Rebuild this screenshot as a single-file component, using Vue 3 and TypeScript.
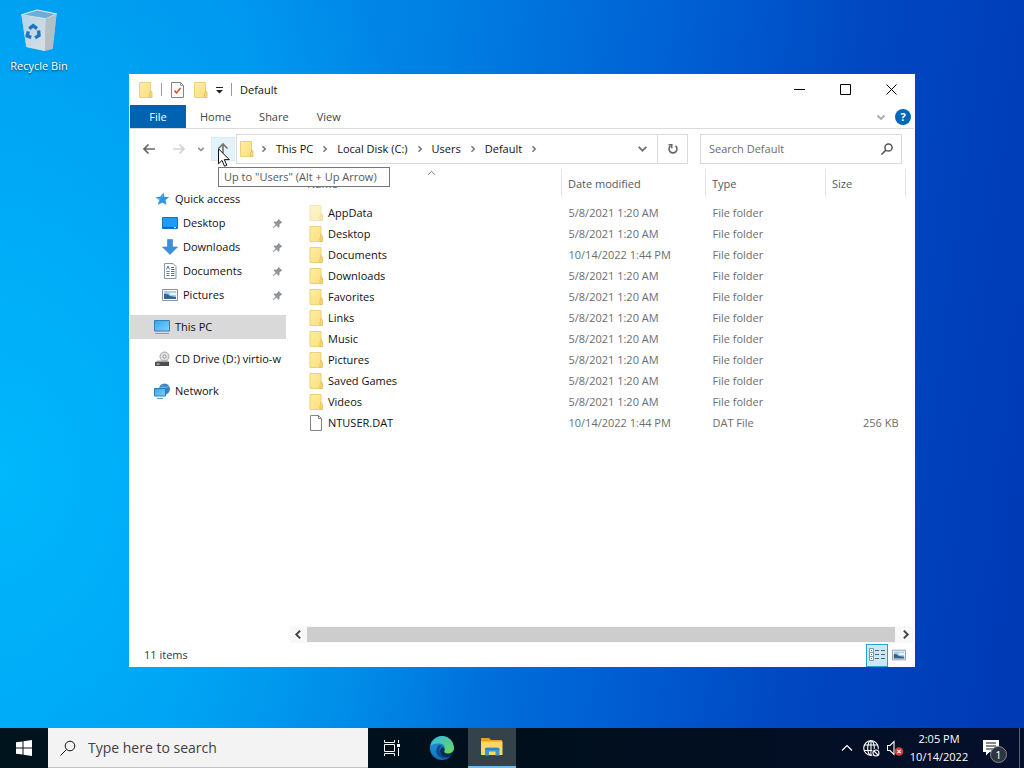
<script setup lang="ts">
import { ref } from 'vue'

interface Entry {
  name: string
  date: string
  type: string
  size: string
  icon: string
  faded?: boolean
}

interface Place {
  label: string
  icon: string
  nested?: boolean
  spaced?: boolean
}

const tabs: string[] = ['Home', 'Share', 'View']
const crumbs: string[] = ['This PC', 'Local Disk (C:)', 'Users', 'Default']

const places: Place[] = [
  { label: 'Quick access', icon: 'star' },
  { label: 'Desktop', icon: 'desktop', nested: true },
  { label: 'Downloads', icon: 'download', nested: true },
  { label: 'Documents', icon: 'document', nested: true },
  { label: 'Pictures', icon: 'picture', nested: true },
  { label: 'This PC', icon: 'computer', spaced: true },
  { label: 'CD Drive (D:) virtio-w', icon: 'drive', spaced: true },
  { label: 'Network', icon: 'network', spaced: true },
]
const current = ref('This PC')

const folder = (name: string, date = '5/8/2021 1:20 AM', faded = false): Entry => ({
  name, date, type: 'File folder', size: '', icon: 'folder', faded,
})

const entries: Entry[] = [
  folder('AppData', '5/8/2021 1:20 AM', true),
  folder('Desktop'),
  folder('Documents', '10/14/2022 1:44 PM'),
  folder('Downloads'),
  folder('Favorites'),
  folder('Links'),
  folder('Music'),
  folder('Pictures'),
  folder('Saved Games'),
  folder('Videos'),
  { name: 'NTUSER.DAT', date: '10/14/2022 1:44 PM', type: 'DAT File', size: '256 KB', icon: 'file' },
]

const query = ref('')
const taskQuery = ref('')
</script>

<template>
  <div class="screen">
    <svg class="defs" aria-hidden="true">
      <defs>
        <linearGradient id="paper" x1="0" y1="0" x2="1" y2="1">
          <stop offset="0" stop-color="#ffeda3" /><stop offset="1" stop-color="#fbdf7d" />
        </linearGradient>
        <linearGradient id="glass" x1="0" y1="0" x2="1" y2="1">
          <stop offset="0" stop-color="#35a5ee" /><stop offset="1" stop-color="#7fd3fb" />
        </linearGradient>
        <linearGradient id="binFront" x1="0" y1="0" x2="1" y2="1">
          <stop offset="0" stop-color="#b5d3e6" /><stop offset="1" stop-color="#dadfe2" />
        </linearGradient>
        <linearGradient id="edgeBlue" x1="0" y1="0" x2="1" y2="1">
          <stop offset="0" stop-color="#1b9de2" /><stop offset="1" stop-color="#0c59a4" />
        </linearGradient>
        <linearGradient id="edgeGreen" x1="0" y1="0" x2="1" y2="1">
          <stop offset="0" stop-color="#35b8e8" /><stop offset="1" stop-color="#6bdc52" />
        </linearGradient>
      </defs>
      <symbol id="folder" viewBox="0 0 15 16">
        <path d="M1.500 .5h11v15h-11z" fill="url(#paper)" stroke="#ecd07c" />
        <path d="M11.500 15.500v-3.500l1-1.500v-2l1.500 2v5z" fill="#f9dc79" stroke="#deba5a" stroke-width=".8" />
      </symbol>
      <symbol id="file" viewBox="0 0 16 16">
        <path d="M2.500 .5h8l3 3v12h-11z" fill="#fff" stroke="#858585" />
        <path d="M10.500 .5v3h3" fill="none" stroke="#858585" />
      </symbol>
      <symbol id="star" viewBox="0 0 16 16">
        <path d="M9.500 1.500l1 4.500 4.800 .1-3.800 3 1 5-4-2.700-4.800 2.700 1.600-4.900-3.800-3.200 4.700-.3z" fill="#2f94e0" />
        <path d="M2 6.500l4 1.500-1.500 5M9.500 2.500l-1.500 4" fill="none" stroke="#65b8f0" stroke-width=".8" />
      </symbol>
      <symbol id="desktop" viewBox="0 0 16 16">
        <path d="M.5 2.500h15v11h-15z" fill="#1e9bf5" stroke="#1474c4" />
        <path d="M1 12h14v1h-14z" fill="#0d62ad" /><path d="M12 12h2v1h-2z" fill="#fff" />
      </symbol>
      <symbol id="download" viewBox="0 0 16 16">
        <path d="M5.500 .5h5v7.500h5l-7.500 7.500-7.500-7.500h5z" fill="#3d8fdc" stroke="#3080cb" stroke-width=".6" />
      </symbol>
      <symbol id="document" viewBox="0 0 16 16">
        <path d="M2.500 .5h8.500l3 3v12h-11.500z" fill="#fff" stroke="#8797a3" />
        <path d="M4.500 6.500l1.500-3.500 1.500 3.500M9 4.500h3M9 6.500h3.500M4.500 8.500h3M9 8.500h3.500M4.500 10.500h3M9 10.500h3.500M4.500 12.500h3M9 12.500h3.500" fill="none" stroke="#3580b5" />
      </symbol>
      <symbol id="picture" viewBox="0 0 16 16">
        <path d="M.5 2.500h15v11h-15z" fill="#fff" stroke="#8592a3" />
        <path d="M2 4h12v8h-12z" fill="#9bd0f3" />
        <path d="M2 7q3-1 6 2l6 1v2h-12z" fill="#3b6288" /><path d="M7 6q3-1 7 0v2h-5z" fill="#e9f5fc" />
      </symbol>
      <symbol id="computer" viewBox="0 0 16 16">
        <path d="M.5 1.500h15v10.500h-15z" fill="url(#glass)" stroke="#2b82bd" />
        <path d="M1 14.500h14" stroke="#69a6cb" />
      </symbol>
      <symbol id="drive" viewBox="0 0 16 16">
        <circle cx="10.500" cy="5.500" r="4.500" fill="#e0e0e0" stroke="#a6a6a6" />
        <circle cx="10.500" cy="5.500" r="1.500" fill="#fff" stroke="#8d8d8d" />
        <path d="M3 9.500h11l1.500 2h-14z" fill="#aaa" /><path d="M1 11h14v4h-14z" fill="#4d4d4d" />
        <path d="M2.500 13h3" stroke="#ddd" />
      </symbol>
      <symbol id="network" viewBox="0 0 16 16">
        <circle cx="10.500" cy="6" r="5.500" fill="#3785c4" />
        <path d="M8 2q3 2 3 9M5 4.500q5 1 10-1" stroke="#8dc4ea" fill="none" stroke-width=".8" />
        <path d="M.5 5.500h11v7.500h-11z" fill="url(#glass)" stroke="#2a7db7" />
        <path d="M3 15.500h6" stroke="#559dcd" />
      </symbol>
      <symbol id="pin" viewBox="0 0 12 12">
        <path d="M7 .8l4.200 4.200-1.300 .4-1.900 2 .2 2.300-1 .8-2.400-2.400-3.400 3.200-.7-.7 3.300-3.400-2.400-2.400 .9-1 2.200 .2 2.100-1.900z" fill="#8c959e" />
      </symbol>
      <symbol id="chevron" viewBox="0 0 10 10">
        <path d="M1.500 3.500l3.500 3.500 3.500-3.500" fill="none" stroke="currentColor" stroke-width="1.800" />
      </symbol>
      <symbol id="thinUp" viewBox="0 0 12 12">
        <path d="M1 8.500l5-5 5 5" fill="none" stroke="currentColor" stroke-width="1.200" />
      </symbol>
      <symbol id="crumb" viewBox="0 0 8 8">
        <path d="M2.500 1.200l2.800 2.800-2.800 2.800" fill="none" stroke="#777" stroke-width="1.500" />
      </symbol>
      <symbol id="arrow" viewBox="0 0 14 14">
        <path d="M13 7h-11M6.500 2.500l-4.500 4.500 4.500 4.500" fill="none" stroke="currentColor" stroke-width="1.700" />
      </symbol>
      <symbol id="lens" viewBox="0 0 16 16">
        <circle cx="10" cy="6" r="4.800" fill="none" stroke="currentColor" />
        <path d="M6.500 9.500l-6 6" stroke="currentColor" />
      </symbol>
    </svg>

    <main class="desktop">
      <button class="shortcut">
        <svg class="bin" viewBox="0 0 42 44">
          <path d="M3 6l16-5 20 4-4 36-8 2-19-4z" fill="#9fc8e2" />
          <path d="M3 6l16-5 20 4-11 5z" fill="#6eaed6" stroke="#e2f0f8" />
          <path d="M3 6l25 4-1 33-19-4z" fill="url(#binFront)" />
          <path d="M28 10l11-5-4 35-8 3z" fill="#b4bec5" />
          <g fill="none" stroke="#1976c5" stroke-width="3.500">
            <path d="M11 20l4-3 4 3M20.500 22l.5 5-4 2.500M13 29l-4-1.500 1-4.500" />
          </g>
        </svg>
        <span>Recycle Bin</span>
      </button>

      <section class="window" aria-label="Default">
        <header class="titlebar">
          <svg class="quick"><use href="#folder" /></svg>
          <i class="rule"></i>
          <button class="quick" aria-label="Properties">
            <svg viewBox="0 0 15 16">
              <path d="M1.500 .5h9l3 3v12h-12z" fill="#fff" stroke="#858585" />
              <path d="M10.500 .5v3h3" fill="none" stroke="#999" />
              <path d="M4.500 8.500l2 2.500 4-5" fill="none" stroke="#d8552c" stroke-width="1.600" />
            </svg>
          </button>
          <button class="quick" aria-label="New folder"><svg><use href="#folder" /></svg></button>
          <button class="caret" aria-label="Customize Quick Access Toolbar">
            <svg viewBox="0 0 7 8"><path d="M0 1.500h7" stroke="#222" /><path d="M0 4h7l-3.500 3.500z" fill="#222" /></svg>
          </button>
          <i class="rule"></i>
          <span class="title">Default</span>
          <div class="controls">
            <button aria-label="Minimize"><svg viewBox="0 0 11 11"><path d="M0 5.500h11" /></svg></button>
            <button aria-label="Maximize"><svg viewBox="0 0 11 11"><path d="M.5 .5h10v10h-10z" /></svg></button>
            <button aria-label="Close"><svg viewBox="0 0 11 11"><path d="M.5 .5l10 10M10.500 .5l-10 10" /></svg></button>
          </div>
        </header>

        <nav class="ribbon">
          <button class="tab file">File</button>
          <button v-for="tab in tabs" :key="tab" class="tab">{{ tab }}</button>
          <button class="expand" aria-label="Expand the Ribbon"><svg><use href="#chevron" /></svg></button>
          <button class="help" aria-label="Help">?</button>
        </nav>

        <div class="toolbar">
          <button class="nav" aria-label="Back"><svg><use href="#arrow" /></svg></button>
          <button class="nav forward" aria-label="Forward"><svg><use href="#arrow" /></svg></button>
          <button class="recent" aria-label="Recent locations"><svg><use href="#chevron" /></svg></button>
          <div class="up-wrap">
            <button class="up" aria-label="Up"><svg><use href="#arrow" /></svg></button>
            <span class="tooltip" role="tooltip">Up to "Users" (Alt + Up Arrow)</span>
            <svg class="pointer" viewBox="0 0 12 19">
              <path d="M.5 .8v15l3.500-3.400 2.500 5.800 2.300-1-2.500-5.600h5z" fill="#fff" stroke="#111" />
            </svg>
          </div>
          <div class="address">
            <svg class="address-icon"><use href="#folder" /></svg>
            <svg class="sep"><use href="#crumb" /></svg>
            <template v-for="crumb in crumbs" :key="crumb">
              <button class="crumb">{{ crumb }}</button>
              <svg class="sep"><use href="#crumb" /></svg>
            </template>
            <button class="history" aria-label="Previous locations"><svg><use href="#chevron" /></svg></button>
            <button class="refresh" aria-label="Refresh">
              <svg viewBox="0 0 12 12">
                <path d="M8.500 2.800a4 4 0 1 1-5 0" fill="none" stroke="#666" stroke-width="1.600" />
                <path d="M1.500 1.800h3.300v3.500" fill="none" stroke="#666" stroke-width="1.500" />
              </svg>
            </button>
          </div>
          <label class="search">
            <input v-model="query" type="text" placeholder="Search Default" aria-label="Search Default" />
            <svg><use href="#lens" /></svg>
          </label>
        </div>

        <div class="body">
          <nav class="places">
            <button
              v-for="place in places"
              :key="place.label"
              class="place"
              :class="{ nested: place.nested, spaced: place.spaced, current: place.label === current }"
              @click="current = place.label"
            >
              <svg class="place-icon"><use :href="'#' + place.icon" /></svg>
              <span>{{ place.label }}</span>
              <svg v-if="place.nested" class="pin"><use href="#pin" /></svg>
            </button>
          </nav>

          <div class="pane">
            <div class="listing">
              <svg class="sort"><use href="#thinUp" /></svg>
              <table>
                <colgroup><col /><col class="c-date" /><col class="c-type" /><col class="c-size" /></colgroup>
                <thead>
                  <tr><th>Name</th><th>Date modified</th><th>Type</th><th>Size</th></tr>
                </thead>
                <tbody>
                  <tr v-for="entry in entries" :key="entry.name">
                    <td class="name">
                      <div>
                        <svg :class="{ faded: entry.faded }"><use :href="'#' + entry.icon" /></svg>{{ entry.name }}
                      </div>
                    </td>
                    <td>{{ entry.date }}</td>
                    <td>{{ entry.type }}</td>
                    <td class="size">{{ entry.size }}</td>
                  </tr>
                </tbody>
              </table>
            </div>
            <div class="scrollbar">
              <button class="left" aria-label="Scroll left"><svg><use href="#chevron" /></svg></button>
              <div class="thumb"></div>
              <button class="right" aria-label="Scroll right"><svg><use href="#chevron" /></svg></button>
            </div>
          </div>
        </div>

        <footer class="status">
          <span>11 items</span>
          <button class="view selected" aria-label="Details view">
            <svg viewBox="0 0 16 14" fill="none">
              <path d="M.5 .5h4v4h-4zM.5 4.500h4v4h-4zM.5 8.500h4v4h-4z" fill="#fff" stroke="#7f95a5" />
              <path d="M2 2.500h1M2 6.500h1M2 10.500h1M6 2.500h4M12 2.500h4M6 6.500h4M12 6.500h4M6 10.500h4M12 10.500h4" stroke="#56636c" />
            </svg>
          </button>
          <button class="view" aria-label="Large icons view"><svg><use href="#picture" /></svg></button>
        </footer>
      </section>
    </main>

    <footer class="taskbar">
      <button class="start" aria-label="Start">
        <svg viewBox="0 0 16 16"><path d="M0 2.300l6.500-.9v6.100h-6.500zM7.500 1.200l8.500-1.200v7.500h-8.500zM0 8.500h6.500v6.100l-6.500-.9zM7.500 8.500h8.500v7.500l-8.500-1.200z" fill="#fff" /></svg>
      </button>
      <label class="task-search">
        <svg><use href="#lens" /></svg>
        <input v-model="taskQuery" type="text" placeholder="Type here to search" aria-label="Type here to search" />
      </label>
      <button class="task" aria-label="Task View">
        <svg class="task-view" viewBox="0 0 16 16" fill="none" stroke="#fff">
          <path d="M.5 0v2.500h10v-2.500M.5 16v-2.500h10v2.500M.5 4.500h10v7h-10zM14.500 0v3M14.500 8v8" />
          <path d="M13 4h3v3h-3z" fill="#fff" stroke="none" />
        </svg>
      </button>
      <button class="task" aria-label="Microsoft Edge">
        <svg class="edge" viewBox="0 0 24 24">
          <circle cx="12" cy="12" r="12" fill="url(#edgeBlue)" />
          <path d="M.2 10a12 12 0 0 1 23.800 1.500c0 4-3 6-6.300 6-3 0-4.200-1.500-3.500-2.700 1.500-2.500 .5-6.800-4.200-7.300-4.500-.3-8 .8-9.800 2.500z" fill="url(#edgeGreen)" />
          <path d="M10 8.500c-4 2.500-5 8-1.500 11.500 3 3.300 8.500 3 12.500-.3-5 1.800-9.700 .2-11.200-3.500-.8-2.200-.2-4.500 1.700-6z" fill="#0a4b91" />
          <path d="M14.500 14.500c-.8 1.400 .5 3.200 3.500 3.200 2.500 0 5-1.200 5.800-4 0 2-1 5-2.500 6.300-4 2-9 1-10.800-2.800-.9-2 0-5 1.500-6.200 2 .5 3 2.200 2.500 3.500z" fill="#04172a" opacity=".75" />
        </svg>
      </button>
      <button class="task active" aria-label="File Explorer">
        <svg class="explorer" viewBox="0 0 22 18">
          <path d="M0 0h8l2 2h11v5h-21z" fill="#e5a31d" /><path d="M1 3.500h20.500v13.500h-21.500v-13.500z" fill="#ffd767" />
          <path d="M4 17.500v-6.500l1.500-1.500h11.500l1.500 1.500v6.500h-4v-4h-6.500v4z" fill="#3a98d8" />
          <path d="M4 11h14.500" stroke="#2275b0" />
        </svg>
      </button>
      <div class="tray">
        <button class="tray-item" aria-label="Show hidden icons"><svg><use href="#thinUp" /></svg></button>
        <button class="tray-item" aria-label="Network">
          <svg class="globe" viewBox="0 0 17 17" fill="none" stroke="#fff" stroke-width="1.100">
            <circle cx="8" cy="8" r="7.300" /><ellipse cx="8" cy="8" rx="3.300" ry="7.300" />
            <path d="M1.500 5h13M1 10.500h14M8 .7v14.500" />
            <circle cx="13" cy="13" r="4.500" fill="#05122a" stroke="none" />
            <circle cx="13" cy="13" r="3" /><path d="M11 11l4 4" />
          </svg>
        </button>
        <button class="tray-item" aria-label="Volume">
          <svg class="globe" viewBox="0 0 17 17">
            <path d="M.5 5.500h2.500l4-4v13l-4-4h-2.500z" fill="none" stroke="#fff" stroke-width="1.100" />
            <circle cx="12" cy="11.500" r="4.300" fill="#d63c3c" />
            <path d="M10.300 9.800l3.400 3.400M13.700 9.800l-3.400 3.400" stroke="#fff" stroke-width="1.100" />
          </svg>
        </button>
        <button class="clock"><span>2:05 PM</span><span>10/14/2022</span></button>
        <button class="notes" aria-label="Notifications, 1 new">
          <svg viewBox="0 0 16 16">
            <path d="M0 0h16v12h-9.500l-3.500 3.500v-3.500h-3z" fill="#fff" />
            <path d="M3 3h10M3 6h10M3 9h7" stroke="#07142b" />
          </svg>
          <span class="badge">1</span>
        </button>
        <button class="peek" aria-label="Show desktop"></button>
      </div>
    </footer>
  </div>
</template>

<style>
html, body { margin: 0; }
</style>

<style scoped>
* { box-sizing: border-box; }
.screen {
  display: flex;
  flex-direction: column;
  height: 100vh;
  min-height: 480px;
  overflow: hidden;
  font: 11px/16px "Open Sans", "Noto Sans", sans-serif;
  color: #111;
}
.defs { position: absolute; width: 0; height: 0; }
svg { display: block; flex: none; }
button { display: flex; align-items: center; justify-content: center; margin: 0; padding: 0; border: 0; background: none; font: inherit; color: inherit; }
input { min-width: 0; padding: 0; border: 0; outline: 0; background: none; font: inherit; color: #222; }

.desktop {
  position: relative;
  flex: 1;
  min-height: 0;
  background:
    radial-gradient(ellipse 50% 90% at 0% 65%, rgba(0, 192, 255, 0.8), rgba(0, 180, 255, 0) 100%),
    linear-gradient(97deg, #0098ee 0%, #0092ee 22%, #007fe2 40%, #0062d4 60%, #0048c2 78%, #0039b4 100%);
}
.shortcut { flex-direction: column; gap: 6px; width: 78px; padding-top: 9px; color: #fff; text-shadow: 0 1px 2px rgba(0, 0, 0, 0.7); }
.bin { width: 42px; height: 43px; }

.window {
  position: absolute;
  inset: 74px 109px 61px 129px;
  display: flex;
  flex-direction: column;
  border: 1px solid #fff;
  border-width: 0 1px;
  background: #fff;
}
.titlebar { display: flex; align-items: center; gap: 8px; height: 31px; padding-left: 8px; }
.quick, .quick svg { width: 15px; height: 16px; }
.rule { width: 1px; height: 13px; background: #999; }
.caret svg { width: 7px; height: 8px; }
.controls { display: flex; align-self: stretch; margin-left: auto; }
.controls button { width: 46px; }
.controls svg { width: 11px; height: 11px; fill: none; stroke: #000; }

.ribbon { display: flex; align-items: center; height: 24px; border-bottom: 1px solid #dadbdc; color: #444; }
.tab { align-self: stretch; padding: 0 14px; }
.file { width: 56px; background: #0063b1; color: #fff; }
.expand { margin-left: auto; color: #aaa; }
.expand svg { width: 10px; height: 10px; }
.help { width: 16px; height: 16px; margin: 0 3px 0 9px; border-radius: 8px; background: #0068b8; color: #fff; font-weight: 700; }

.toolbar { display: flex; align-items: center; height: 39px; padding: 0 12px 0 7px; }
.nav { width: 24px; margin-right: 6px; color: #666; }
.nav svg, .up svg { width: 14px; height: 14px; }
.forward { margin-right: 0; color: #d2d2d2; }
.forward svg { transform: rotate(180deg); }
.recent { width: 20px; color: #888; }
.recent svg { width: 8px; height: 8px; }
.up-wrap { position: relative; margin-right: 1px; }
.up { width: 24px; height: 24px; border: 1px solid #d8edf9; background: #e3f2fb; color: #777; }
.up svg { transform: rotate(90deg); }
.tooltip {
  position: absolute;
  z-index: 2;
  top: 30px;
  left: 7px;
  padding: 1px 12px 1px 5px;
  border: 1px solid #767676;
  background: #fff;
  color: #575757;
  white-space: nowrap;
}
.pointer { position: absolute; z-index: 3; top: 11px; left: 7px; width: 12px; height: 19px; }
.address { display: flex; flex: 1; align-items: center; min-width: 0; height: 30px; padding-left: 2px; border: 1px solid #d9d9d9; }
.address-icon { width: 15px; height: 16px; }
.sep { width: 8px; height: 8px; margin: 0 8px; }
.address-icon + .sep { margin-left: 6px; }
.crumb { white-space: nowrap; }
.history { margin-left: auto; padding: 0 9px; color: #777; }
.history svg { width: 11px; height: 11px; }
.refresh { align-self: stretch; width: 30px; border-left: 1px solid #d9d9d9; }
.refresh svg { width: 12px; height: 12px; }
.search { display: flex; align-items: center; width: 202px; height: 30px; margin-left: 12px; padding: 0 8px; border: 1px solid #d9d9d9; }
.search input { flex: 1; }
.search input::placeholder { color: #6d6d6d; opacity: 1; }
.search svg { width: 12px; height: 12px; color: #555; stroke-width: 2px; }

.body { display: flex; flex: 1; min-height: 0; }
.places { display: flex; flex-direction: column; width: 156px; padding-top: 19px; }
.place { justify-content: flex-start; gap: 5px; height: 24px; padding-left: 24px; white-space: nowrap; }
.nested { padding-left: 32px; padding-right: 3px; }
.spaced { margin-top: 8px; }
.current { background: #d9d9d9; }
.place-icon { width: 16px; height: 16px; }
.pin { width: 11px; height: 11px; margin-left: auto; }

.pane { display: flex; flex: 1; flex-direction: column; min-width: 0; margin-left: 4px; }
.listing { position: relative; flex: 1; min-height: 0; margin: 1px 8px 0 1px; overflow: hidden; }
.sort { position: absolute; top: 0; left: 135px; width: 11px; height: 8px; color: #555; }
table { width: 100%; border-collapse: collapse; table-layout: fixed; }
.c-date { width: 144px; }
.c-type { width: 120px; }
.c-size { width: 80px; }
th { height: 28px; padding: 2px 6px 0; border-right: 1px solid #e5e5e5; text-align: left; font-weight: 400; color: #4c5a6b; }
th:first-child { padding-left: 16px; }
td { height: 21px; padding: 0 7px; color: #6d6d6d; white-space: nowrap; }
tbody::before { content: ""; display: block; height: 5px; }
td.name { padding-left: 17px; color: #111; }
.name div { display: flex; align-items: center; gap: 4px; }
.name svg { width: 16px; height: 16px; }
.faded { opacity: 0.55; }
.size { text-align: right; }
.scrollbar { display: flex; height: 17px; background: #f8f8f8; }
.scrollbar button { width: 17px; }
.scrollbar svg { width: 11px; height: 11px; color: #444; }
.left svg { transform: rotate(90deg); }
.right svg { transform: rotate(-90deg); }
.thumb { flex: 1; margin: 1px 2px 1px 0; background: #cdcdcd; }

.status { display: flex; align-items: center; height: 24px; padding: 0 4px 0 14px; color: #2c3a4e; }
.status span { margin-right: auto; }
.view { width: 22px; height: 23px; }
.view svg { width: 14px; height: 14px; }
.view.selected { border: 1px solid #26a0da; background: #cbe8f6; }
.view.selected svg { width: 16px; }

.taskbar { display: flex; height: 40px; background: linear-gradient(90deg, #00141e, #000f1b 50%, #050f2c); color: #fff; }
.start { width: 48px; }
.start svg { width: 16px; height: 16px; }
.task-search { display: flex; align-items: center; gap: 12px; width: 320px; padding: 0 12px; border: 1px solid #c5c5c5; border-width: 0 0 1px; background: #f3f3f3; color: #111; font-size: 14px; line-height: 20px; }
.task-search svg { width: 16px; height: 16px; }
.task-search input { flex: 1; }
.task-search input::placeholder { color: #404040; opacity: 1; }
.task { width: 48px; margin-right: 2px; }
.task-view { width: 16px; height: 16px; }
.edge { width: 24px; height: 24px; }
.explorer { width: 22px; height: 18px; }
.active { border-bottom: 2px solid #76b9ed; background: #34424c; }
.tray { display: flex; margin-left: auto; }
.tray-item { width: 24px; }
.tray-item svg { width: 12px; height: 12px; }
.tray-item .globe { width: 17px; height: 17px; }
.clock { flex-direction: column; width: 64px; line-height: 18px; }
.notes { position: relative; width: 48px; padding-right: 8px; }
.notes svg { width: 16px; height: 16px; }
.badge { position: absolute; top: 18px; left: 19px; width: 17px; height: 17px; border: 1px solid #888; border-radius: 9px; background: #2c3540; line-height: 15px; text-align: center; }
.peek { width: 5px; border-left: 1px solid #5a6070; }
</style>
